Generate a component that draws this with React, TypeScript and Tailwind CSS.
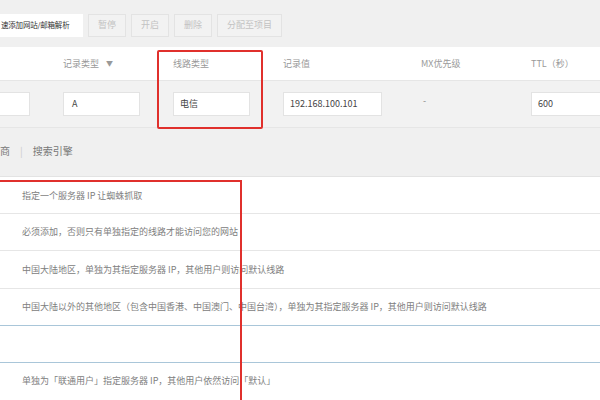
import React from 'react';

export default function App() {
  const rows = [
    { text: '指定一个服务器 IP 让蜘蛛抓取', h: 'h-[36px]', line: 'border-[#e6e6e6]' },
    { text: '必须添加，否则只有单独指定的线路才能访问您的网站', h: 'h-[37px]', line: 'border-[#e6e6e6]' },
    { text: '中国大陆地区，单独为其指定服务器 IP，其他用户则访问默认线路', h: 'h-[38px]', line: 'border-[#e6e6e6]' },
    { text: '中国大陆以外的其他地区（包含中国香港、中国澳门、中国台湾），单独为其指定服务器 IP，其他用户则访问默认线路', h: 'h-[37px]', line: 'border-[#a9c6d9]' },
    { text: '', h: 'h-[37px]', line: 'border-[#a9c6d9]' },
    { text: '单独为「联通用户」指定服务器 IP，其他用户依然访问「默认」', h: 'h-[36px]', line: 'border-transparent' },
  ];

  return (
    <div className="relative w-[600px] h-[400px] overflow-hidden bg-white text-[#666] font-['Noto_Sans_CJK_SC','Noto_Sans',sans-serif] text-[9px]">
      {/* toolbar */}
      <div className="h-[47px] bg-[#f0f0f0] flex items-center gap-[5px] pt-[3px]">
        <div className="w-[83px] h-[23px] bg-white flex items-center pl-[1px] text-[#333] text-[7.5px] tracking-[-0.2px] whitespace-nowrap">
          速添加网站/邮箱解析
        </div>
        {['暂停', '开启', '删除', '分配至项目'].map((b) => (
          <div
            key={b}
            className="h-[23px] px-[9px] min-w-[37px] flex items-center justify-center border border-[#e3e3e3] bg-[#f2f2f2] text-[#c2c2c2]"
          >
            {b}
          </div>
        ))}
      </div>

      {/* header */}
      <div className="h-[34px] bg-white border-b border-[#e6e6e6] flex items-center text-[#999]">
        <div className="w-[63px]" />
        <div className="w-[110px] flex items-center gap-[7px]">
          记录类型
          <span className="text-[7px] text-[#999]">▼</span>
        </div>
        <div className="w-[110px]">线路类型</div>
        <div className="w-[138px]">记录值</div>
        <div className="w-[110px]">MX优先级</div>
        <div>TTL（秒）</div>
      </div>

      {/* input row */}
      <div className="h-[47px] bg-[#f2f2f2] border-b border-[#e6e6e6] flex items-center text-[#444]">
        <div className="w-[63px]">
          <div className="w-[30px] h-[24px] bg-white border border-l-0 border-[#e3e3e3]" />
        </div>
        <div className="w-[110px]">
          <div className="w-[77px] h-[24px] bg-white border border-[#e3e3e3] flex items-center pl-[8px]">A</div>
        </div>
        <div className="w-[110px]">
          <div className="w-[77px] h-[24px] bg-white border border-[#e3e3e3] flex items-center pl-[6px]">电信</div>
        </div>
        <div className="w-[138px]">
          <div className="w-[99px] h-[24px] bg-white border border-[#e3e3e3] flex items-center pl-[6px]">192.168.100.101</div>
        </div>
        <div className="w-[110px] pl-[2px] text-[#888] -mt-[6px]">-</div>
        <div className="flex-1">
          <div className="w-full h-[24px] bg-white border border-r-0 border-[#e3e3e3] flex items-center pl-[6px]">600</div>
        </div>
      </div>

      {/* tabs */}
      <div className="h-[49px] bg-[#f0f0f0] border-b border-[#e3e3e3] flex items-center gap-[10px] text-[#777] text-[10px] pb-[4px]">
        <span>商</span>
        <span className="text-[#ccc]">|</span>
        <span>搜索引擎</span>
      </div>

      {/* list */}
      <div className="flex flex-col pt-[1px]">
        {rows.map((r, i) => (
          <div key={i} className={`${r.h} border-b ${r.line} flex items-center pl-[22px] text-[#808080] whitespace-nowrap`}>
            {r.text}
          </div>
        ))}
      </div>

      {/* annotation boxes */}
      <div className="absolute left-[157px] top-[50px] w-[106px] h-[79px] border-2 border-[#e0302c] rounded-[2px]" />
      <div className="absolute left-[-4px] top-[180px] w-[246px] h-[240px] border-2 border-[#e0302c]" />
    </div>
  );
}
